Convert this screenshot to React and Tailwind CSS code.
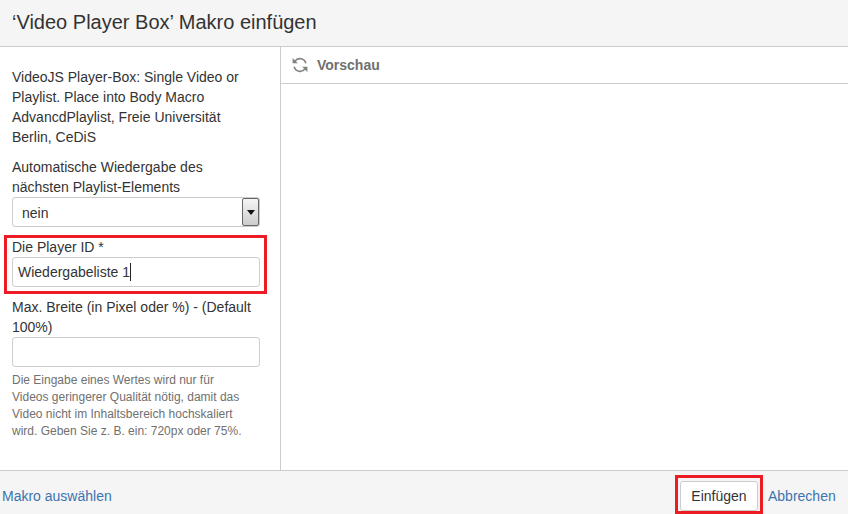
import React from "react";

function Field({ label, children }) {
  return (
    <div className="mb-[10px]">
      <div className="text-[14px] leading-[20px] text-[#333333]">{label}</div>
      {children}
    </div>
  );
}

export default function App() {
  return (
    <div className="relative w-[848px] h-[514px] overflow-hidden bg-white flex flex-col font-['Liberation_Sans',Arial,sans-serif] text-[#333333]">
      <header className="h-[47px] shrink-0 bg-[#f5f5f5] border-b border-[#cccccc] pl-[12px] flex items-center">
        <h1 className="text-[20px] leading-[24px] font-normal text-[#333333] -mt-[3px]">‘Video Player Box’ Makro einfügen</h1>
      </header>
      <main className="flex-1 flex min-h-0">
        <aside className="w-[281px] shrink-0 border-r border-[#cccccc] pl-[12px] pr-[20px] pt-[20px]">
          <p className="text-[14px] leading-[20px] mb-[10px]">
            VideoJS Player-Box: Single Video or Playlist. Place into Body Macro AdvancdPlaylist, Freie Universität Berlin, CeDiS
          </p>
          <Field label="Automatische Wiedergabe des nächsten Playlist-Elements">
            <div className="h-[30px] w-[248px] border border-[#cccccc] rounded-[3px] bg-white flex items-center justify-between pl-[9px]">
              <span className="text-[14px] leading-[20px] pt-[2px] text-[#333333]">nein</span>
              <span className="w-[17px] h-[28px] border border-[#666666] rounded-[2px] bg-gradient-to-b from-[#f6f6f6] to-[#cccccc] flex items-center justify-center">
                <svg width="8" height="5" viewBox="0 0 8 5"><path d="M0 0h8L4 5z" fill="#111111" /></svg>
              </span>
            </div>
          </Field>
          <Field label="Die Player ID *">
            <div className="h-[30px] w-[248px] border border-[#cccccc] rounded-[3px] bg-white flex items-center pl-[5px]">
              <span className="text-[14px] text-[#333333]">Wiedergabeliste 1</span>
              <span className="w-px h-[18px] bg-[#222222]"></span>
            </div>
          </Field>
          <Field label="Max. Breite (in Pixel oder %) - (Default 100%)">
            <div className="h-[30px] w-[248px] border border-[#cccccc] rounded-[3px] bg-white"></div>
            <p className="mt-[5px] w-[235px] text-[12px] leading-[17px] text-[#707070]">
              Die Eingabe eines Wertes wird nur für Videos geringerer Qualität nötig, damit das Video nicht im Inhaltsbereich hochskaliert wird. Geben Sie z. B. ein: 720px oder 75%.
            </p>
          </Field>
        </aside>
        <section className="flex-1 min-w-0">
          <div className="h-[37px] border-b border-[#cccccc] flex items-center pl-[11px] gap-[9px]">
            <svg width="16" height="16" viewBox="0 0 16 16" fill="none" stroke="#808080" strokeWidth="1.6">
              <path d="M3 4.2A6 6 0 0 1 13.8 6.4" />
              <path d="M13 11.8A6 6 0 0 1 2.2 9.6" />
              <path d="M0.6 1V6.2H5.8z" fill="#808080" stroke="none" />
              <path d="M15.4 15V9.8H10.2z" fill="#808080" stroke="none" />
            </svg>
            <span className="text-[14px] font-bold text-[#707070]">Vorschau</span>
          </div>
        </section>
      </main>
      <footer className="h-[44px] shrink-0 bg-[#f5f5f5] border-t border-[#cccccc] flex items-center justify-between pl-[2px] pr-[11px] pt-[7px]">
        <a className="text-[14px] text-[#3b73af]">Makro auswählen</a>
        <div className="flex items-center gap-[10px]">
          <button className="h-[30px] w-[78px] bg-white border border-[#cccccc] rounded-[3px] text-[14px] text-[#333333]">Einfügen</button>
          <a className="text-[14px] text-[#3b73af] w-[69px]">Abbrechen</a>
        </div>
      </footer>
      <div className="absolute left-[4px] top-[235px] w-[263px] h-[59px] border-[3px] border-[#ed1c24] pointer-events-none"></div>
      <div className="absolute left-[675px] top-[475px] w-[88px] h-[39px] border-[3px] border-[#ed1c24] pointer-events-none"></div>
    </div>
  );
}
